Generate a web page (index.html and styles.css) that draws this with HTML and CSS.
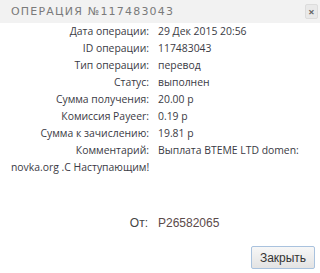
FILE: index.html
```html
<!DOCTYPE html>
<html lang="ru">
<head>
    <meta charset="UTF-8">
    <title>Операция</title>
    <link rel="stylesheet" href="styles.css">
</head>
<body>
    <div class="dialog">
        <div class="dialog-header">
            <span class="dialog-title">Операция №117483043</span>
            <span class="dialog-close">&#215;</span>
        </div>
        <div class="dialog-body">
            <div class="row"><span class="label">Дата операции:</span><span class="value">29 Дек 2015 20:56</span></div>
            <div class="row"><span class="label">ID операции:</span><span class="value">117483043</span></div>
            <div class="row"><span class="label">Тип операции:</span><span class="value">перевод</span></div>
            <div class="row"><span class="label">Статус:</span><span class="value">выполнен</span></div>
            <div class="row"><span class="label">Сумма получения:</span><span class="value">20.00 р</span></div>
            <div class="row"><span class="label">Комиссия Payeer:</span><span class="value">0.19 р</span></div>
            <div class="row"><span class="label">Сумма к зачислению:</span><span class="value">19.81 р</span></div>
            <div class="row"><span class="label">Комментарий:</span><span class="value">Выплата BTEME LTD domen: novka.org .С Наступающим!</span></div>

            <div class="from-row"><span class="from-label">От:</span><span class="from-value">P26582065</span></div>
        </div>
        <div class="dialog-footer">
            <button class="btn-close" type="button">Закрыть</button>
        </div>
    </div>
</body>
</html>
```

FILE: styles.css
```css
body {
    margin: 0;
    background-color: #fff;
    font-family: "Open Sans", sans-serif;
}

/* Dialog header */
.dialog-header {
    height: 23px;
    background-color: #f2f2f2;
    display: flex;
    align-items: center;
    justify-content: space-between;
    padding: 0 2px 0 11px;
}

.dialog-title {
    text-transform: uppercase;
    font-family: "DejaVu Sans", sans-serif;
    font-size: 11px;
    letter-spacing: 1.2px;
    color: #7a7a7a;
}

.dialog-close {
    width: 11px;
    height: 13px;
    border: 1px solid #dcdcdc;
    background-color: #e9e9e9;
    color: #666;
    font-size: 11px;
    font-weight: bold;
    line-height: 13px;
    text-align: center;
    border-radius: 2px;
}

/* Details */
.dialog-body {
    padding: 0 11px;
    font-size: 10.4px;
    line-height: 17px;
    color: #3a3a44;
}

.label {
    display: inline-block;
    width: 141px;
    text-align: right;
    margin-right: 9px;
    margin-left: -3px;
}

.from-row {
    margin-top: 39px;
    font-family: "Liberation Sans", Arial, sans-serif;
    font-size: 12px;
    color: #444;
}

.from-label {
    display: inline-block;
    width: 137px;
    text-align: right;
    margin-right: 10px;
}

.from-value {
    color: #5b4a4a;
}

/* Footer */
.dialog-footer {
    display: flex;
    justify-content: flex-end;
    padding: 14px 5px 0 0;
}

.btn-close {
    width: 64px;
    height: 23px;
    border: 1px solid #a9c2de;
    border-radius: 2px;
    background: linear-gradient(#f7f7f7, #e3e3e3);
    font-family: "Liberation Sans", Arial, sans-serif;
    font-size: 12px;
    color: #333;
    padding: 0;
}
```
